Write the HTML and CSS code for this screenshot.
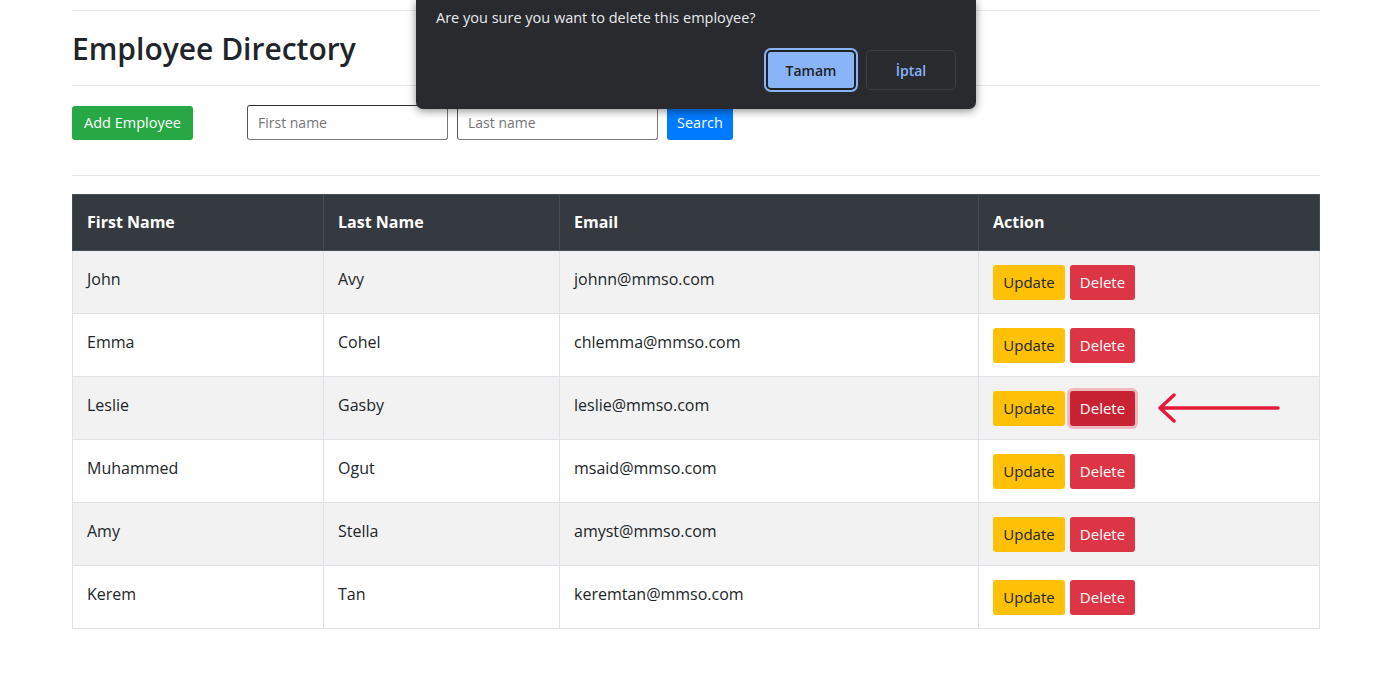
FILE: index.html
```html
<!DOCTYPE html>
<html>
<head>
<meta charset="utf-8">
<link rel="stylesheet" href="styles.css">
</head>
<body>
<div class="container">
  <hr class="rule rule-top">
  <h2 class="title">Employee Directory</h2>
  <hr class="rule rule-mid">
  <div class="toolbar">
    <button class="btn btn-success">Add Employee</button>
    <div class="search">
      <input class="field" type="text" placeholder="First name">
      <input class="field" type="text" placeholder="Last name">
      <button class="btn btn-primary btn-search">Search</button>
    </div>
  </div>
  <hr class="rule rule-bottom">
  <table class="table">
    <thead>
      <tr><th class="c1">First Name</th><th class="c2">Last Name</th><th class="c3">Email</th><th class="c4">Action</th></tr>
    </thead>
    <tbody>
      <tr class="odd"><td>John</td><td>Avy</td><td>johnn@mmso.com</td><td><div class="actions"><button class="btn btn-warning">Update</button><button class="btn btn-danger">Delete</button></div></td></tr>
      <tr><td>Emma</td><td>Cohel</td><td>chlemma@mmso.com</td><td><div class="actions"><button class="btn btn-warning">Update</button><button class="btn btn-danger">Delete</button></div></td></tr>
      <tr class="odd"><td>Leslie</td><td>Gasby</td><td>leslie@mmso.com</td><td><div class="actions"><button class="btn btn-warning">Update</button><button class="btn btn-danger is-focused">Delete</button>
        <svg class="arrow" width="130" height="34" viewBox="0 0 130 34"><path d="M4 17 H122 M18 4 L4 17 L18 30" fill="none" stroke="#e41b3a" stroke-width="3.5" stroke-linecap="round" stroke-linejoin="round"/></svg>
      </div></td></tr>
      <tr><td>Muhammed</td><td>Ogut</td><td>msaid@mmso.com</td><td><div class="actions"><button class="btn btn-warning">Update</button><button class="btn btn-danger">Delete</button></div></td></tr>
      <tr class="odd"><td>Amy</td><td>Stella</td><td>amyst@mmso.com</td><td><div class="actions"><button class="btn btn-warning">Update</button><button class="btn btn-danger">Delete</button></div></td></tr>
      <tr><td>Kerem</td><td>Tan</td><td>keremtan@mmso.com</td><td><div class="actions"><button class="btn btn-warning">Update</button><button class="btn btn-danger">Delete</button></div></td></tr>
    </tbody>
  </table>
</div>

<div class="dialog">
  <p class="dialog-msg">Are you sure you want to delete this employee?</p>
  <div class="dialog-buttons">
    <button class="dbtn dbtn-ok">Tamam</button>
    <button class="dbtn dbtn-cancel">İptal</button>
  </div>
</div>
</body>
</html>
```

FILE: styles.css
```css
* { box-sizing: border-box; }
body {
  margin: 0;
  font-family: "Open Sans", "Noto Sans", sans-serif;
  font-size: 16px;
  color: #212529;
  background: #fff;
}
.container {
  width: 1248px;
  margin-left: 72px;
}
.rule {
  border: 0;
  border-top: 1px solid #e6e6e6;
  margin: 0;
}
.rule-top { margin-top: 10px; }
.title {
  margin: 0;
  height: 74px;
  line-height: 76px;
  font-size: 30px;
  font-weight: 600;
  color: #212529;
}
.toolbar {
  display: flex;
  align-items: center;
  margin-top: 19px;
  height: 35px;
}
.search {
  display: flex;
  align-items: center;
  margin-left: 54px;
  gap: 9px;
}
.field {
  width: 201px;
  height: 35px;
  border: 1px solid #767676;
  border-top-color: #333;
  border-left-color: #555;
  border-radius: 3px;
  padding: 0 10px;
  font-family: inherit;
  font-size: 14px;
  color: #212529;
}
.field::placeholder { color: #757575; }
.btn {
  font-family: inherit;
  font-size: 14.5px;
  height: 34px;
  padding: 0;
  border: 1px solid transparent;
  border-radius: 3px;
  white-space: nowrap;
  cursor: pointer;
}
.btn-success { background: #28a745; color: #fff; width: 121px; }
.btn-primary { background: #007bff; color: #fff; }
.btn-search { width: 66px; }
.rule-bottom { margin-top: 35px; }
.table {
  margin-top: 18px;
  width: 1248px;
  border-collapse: collapse;
}
.table th, .table td {
  text-align: left;
  padding: 0 14px;
  vertical-align: middle;
}
.table th {
  background: #343a40;
  color: #fff;
  font-weight: 700;
  height: 56px;
  border: 1px solid #454d55;
  padding-bottom: 1px;
}
.table td {
  height: 63px;
  border: 1px solid #dee2e6;
  padding-bottom: 6px;
}
.table td:last-child { padding-bottom: 0; }
.c1 { width: 251px; }
.c2 { width: 236px; }
.c3 { width: 419px; }
.odd td { background: #f2f2f2; }
.actions {
  display: flex;
  align-items: center;
  gap: 5px;
}
.btn-warning { background: #ffc107; color: #212529; height: 35px; width: 72px; font-size: 15px; }
.btn-danger { background: #dc3545; color: #fff; height: 35px; width: 65px; font-size: 15px; }
.is-focused {
  background: #c82333;
  box-shadow: 0 0 0 3px rgba(225, 83, 97, 0.35);
}
.arrow { margin-left: 16px; }
.dialog {
  position: absolute;
  left: 416px;
  top: 0;
  width: 560px;
  height: 109px;
  background: #292a2d;
  border-radius: 0 0 7px 7px;
  box-shadow: 0 2px 8px rgba(0, 0, 0, 0.45);
  padding: 8px 20px 0 20px;
}
.dialog-msg {
  margin: 0;
  color: #e8eaed;
  font-size: 14.5px;
  line-height: 20px;
}
.dialog-buttons {
  display: flex;
  justify-content: flex-end;
  gap: 10px;
  margin-top: 22px;
}
.dbtn {
  font-family: inherit;
  font-size: 14px;
  font-weight: 600;
  width: 90px;
  height: 40px;
  border-radius: 5px;
}
.dbtn-ok {
  background: #8ab4f8;
  color: #202124;
  border: 2px solid #202124;
  box-shadow: 0 0 0 2px #8ab4f8;
}
.dbtn-cancel {
  background: transparent;
  color: #8ab4f8;
  border: 1px solid #3c4043;
}
```
